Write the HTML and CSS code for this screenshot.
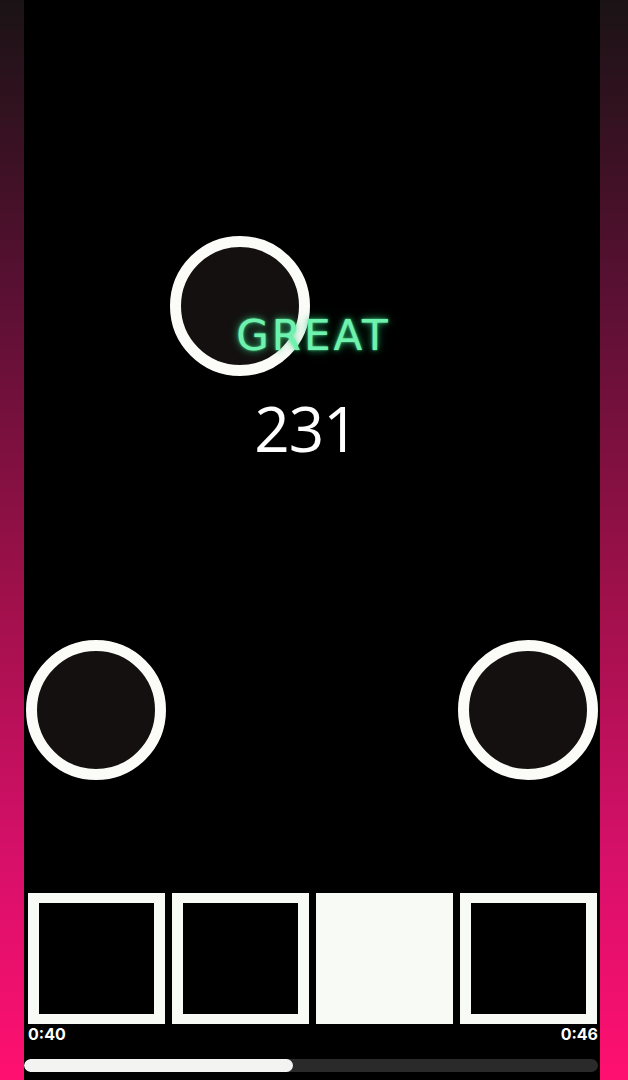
FILE: index.html
```html
<!DOCTYPE html>
<html>
<head>
<meta charset="utf-8">
<link rel="stylesheet" href="styles.css">
</head>
<body>
<div class="screen">
  <div class="side side-left"></div>
  <div class="main">
    <div class="stage">
      <div class="note note-top"></div>
      <div class="note note-left"></div>
      <div class="note note-right"></div>
      <div class="judge">GREAT</div>
      <div class="combo">231</div>
    </div>
    <div class="pads">
      <div class="pad"></div>
      <div class="pad"></div>
      <div class="pad pad-on"></div>
      <div class="pad"></div>
    </div>
    <div class="times">
      <span class="time">0:40</span>
      <span class="time">0:46</span>
    </div>
    <div class="progress">
      <div class="progress-fill" style="width: 269px"></div>
    </div>
  </div>
  <div class="side side-right"></div>
</div>
</body>
</html>
```
FILE: styles.css
```css
html, body {
  margin: 0;
  padding: 0;
  background: #000;
}
.screen {
  display: flex;
  width: 628px;
  height: 1080px;
  overflow: hidden;
}
.side {
  height: 1080px;
  background: linear-gradient(to bottom, #1a1315 0%, #3d1124 15%, #5c1034 28%, #a1104b 56%, #d8106a 80%, #ff1070 100%);
}
.side-left { width: 24px; }
.side-right { width: 28px; }
.main {
  width: 576px;
  height: 1080px;
  background: #000;
  display: flex;
  flex-direction: column;
}
.stage {
  position: relative;
  height: 893px;
  display: flex;
  flex-direction: column;
  align-items: center;
  padding-top: 315px;
  box-sizing: border-box;
}
.note {
  position: absolute;
  width: 140px;
  height: 140px;
  box-sizing: border-box;
  border: 11px solid #fbfbf8;
  border-radius: 50%;
  background: #141010;
}
.note-top { left: 146px; top: 236px; }
.note-left { left: 2px; top: 640px; }
.note-right { left: 434px; top: 640px; }
.judge {
  position: relative;
  z-index: 1;
  font-family: "DejaVu Sans", sans-serif;
  font-weight: 400;
  font-size: 42px;
  line-height: 42px;
  letter-spacing: 3px;
  padding-left: 3px;
  color: #6ff2ae;
  text-shadow: 0 0 2px rgba(90, 240, 160, 0.9), 0 0 6px rgba(50, 210, 130, 0.7), 0 0 12px rgba(40, 190, 110, 0.4);
}
.combo {
  margin-top: 40px;
  margin-right: 12px;
  font-family: "Open Sans", sans-serif;
  font-weight: 500;
  font-size: 62px;
  line-height: 62px;
  letter-spacing: -1px;
  color: #fff;
}
.pads {
  display: flex;
  gap: 7px;
  padding: 0 3px 0 4px;
  height: 131px;
}
.pad {
  flex: 1;
  box-sizing: border-box;
  border: 10px solid #f8faf6;
  border-left-width: 11px;
  border-right-width: 11px;
  background: #000;
}
.pad-on { background: #f8faf6; }
.times {
  display: flex;
  justify-content: space-between;
  padding: 3px 2px 0 4px;
  height: 32px;
  box-sizing: border-box;
}
.time {
  font-family: "Inter", sans-serif;
  font-weight: 700;
  font-size: 16px;
  line-height: 15px;
  color: #fff;
}
.progress {
  margin: 3px 2px 0 0;
  height: 13px;
  border-radius: 7px;
  background: #2a2a2a;
  overflow: hidden;
}
.progress-fill {
  height: 13px;
  border-radius: 7px;
  background: #f3f3f1;
}
```
